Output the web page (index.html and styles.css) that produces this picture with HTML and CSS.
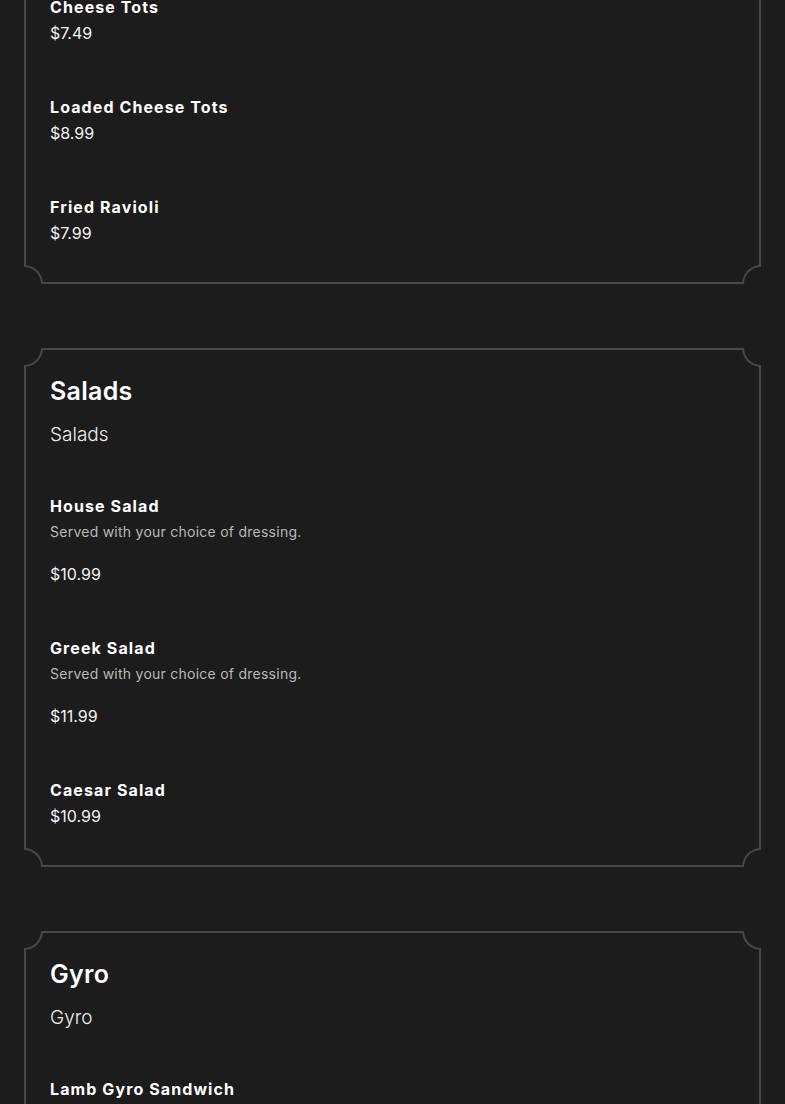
FILE: index.html
```html
<!DOCTYPE html>
<html lang="en">
<head>
<meta charset="utf-8">
<title>Menu</title>
<link rel="stylesheet" href="styles.css">
</head>
<body>
<main class="menu">
  <section class="card card-cut">
    <span class="corner tl"></span><span class="corner tr"></span><span class="corner bl"></span><span class="corner br"></span>
    <div class="items">
      <div class="item">
        <div class="item-name">Cheese Tots</div>
        <div class="item-price">$7.49</div>
      </div>
      <div class="item">
        <div class="item-name">Loaded Cheese Tots</div>
        <div class="item-price">$8.99</div>
      </div>
      <div class="item">
        <div class="item-name">Fried Ravioli</div>
        <div class="item-price">$7.99</div>
      </div>
    </div>
  </section>

  <section class="card">
    <span class="corner tl"></span><span class="corner tr"></span><span class="corner bl"></span><span class="corner br"></span>
    <h2 class="card-title">Salads</h2>
    <p class="card-sub">Salads</p>
    <div class="items">
      <div class="item">
        <div class="item-name">House Salad</div>
        <div class="item-desc">Served with your choice of dressing.</div>
        <div class="item-price spaced">$10.99</div>
      </div>
      <div class="item">
        <div class="item-name">Greek Salad</div>
        <div class="item-desc">Served with your choice of dressing.</div>
        <div class="item-price spaced">$11.99</div>
      </div>
      <div class="item">
        <div class="item-name">Caesar Salad</div>
        <div class="item-price">$10.99</div>
      </div>
    </div>
  </section>

  <section class="card">
    <span class="corner tl"></span><span class="corner tr"></span><span class="corner bl"></span><span class="corner br"></span>
    <h2 class="card-title">Gyro</h2>
    <p class="card-sub">Gyro</p>
    <div class="items">
      <div class="item">
        <div class="item-name">Lamb Gyro Sandwich</div>
        <div class="item-price">$11.99</div>
      </div>
    </div>
  </section>
</main>
</body>
</html>
```

FILE: styles.css
```css
html, body {
  margin: 0;
  padding: 0;
  background: #1c1c1c;
  color: #ffffff;
  font-family: Inter, "Noto Sans", "Liberation Sans", sans-serif;
}

.menu {
  display: flex;
  flex-direction: column;
  gap: 64px;
  padding: 0 24px 64px;
}

.card {
  position: relative;
  border: 2px solid #474747;
  background: #1c1c1c;
  padding: 25px 24px 36px;
}

.card-cut {
  margin-top: -33px;
}

.corner {
  position: absolute;
  width: 17px;
  height: 17px;
  background: #1c1c1c;
  border: 0 solid #474747;
}

.corner.tl {
  top: -2px;
  left: -2px;
  border-right-width: 2px;
  border-bottom-width: 2px;
  border-bottom-right-radius: 100%;
}

.corner.tr {
  top: -2px;
  right: -2px;
  border-left-width: 2px;
  border-bottom-width: 2px;
  border-bottom-left-radius: 100%;
}

.corner.bl {
  bottom: -2px;
  left: -2px;
  border-right-width: 2px;
  border-top-width: 2px;
  border-top-right-radius: 100%;
}

.corner.br {
  bottom: -2px;
  right: -2px;
  border-left-width: 2px;
  border-top-width: 2px;
  border-top-left-radius: 100%;
}

.card-title {
  margin: 0;
  font-size: 25px;
  line-height: 32px;
  font-weight: 600;
  letter-spacing: 0.3px;
}

.card-sub {
  margin: 15px 0 0;
  font-size: 19px;
  line-height: 26px;
  font-weight: 300;
  color: #eeeeee;
  letter-spacing: 0;
}

.card-sub + .items {
  margin-top: 45px;
}

.items {
  display: flex;
  flex-direction: column;
  gap: 48px;
}

.item-name {
  font-size: 16px;
  line-height: 26px;
  font-weight: 700;
  letter-spacing: 1.1px;
}

.item-desc {
  font-size: 14px;
  line-height: 26px;
  font-weight: 400;
  color: #b9b9b9;
  letter-spacing: 0.25px;
}

.item-price {
  font-size: 16px;
  line-height: 26px;
  font-weight: 400;
  color: #f2f2f2;
}

.item-price.spaced {
  margin-top: 16px;
}
```
